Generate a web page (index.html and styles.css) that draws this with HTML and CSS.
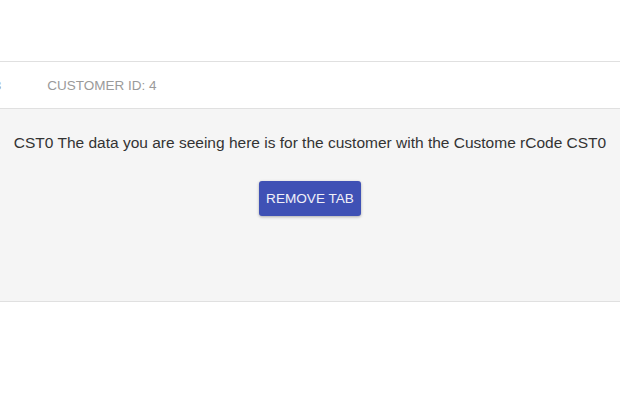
FILE: index.html
```html
<!DOCTYPE html>
<html lang="en">
<head>
<meta charset="UTF-8">
<meta name="viewport" content="width=device-width, initial-scale=1.0">
<title>Customer Tabs</title>
<link rel="stylesheet" href="styles.css">
</head>
<body>

<div class="header"></div>

<div class="tabbar">
    <div class="tabs">
        <div class="tab">Customer ID: 3</div>
        <div class="tab">Customer ID: 4</div>
    </div>
</div>

<div class="tab-content">
    <p>CST0 The data you are seeing here is for the customer with the Custome rCode CST0</p>
    <button class="remove-btn">Remove Tab</button>
</div>

</body>
</html>
```

FILE: styles.css
```css
body {
    font-family: "Liberation Sans", Arial, sans-serif;
    margin: 0;
    padding: 0;
    background: #fff;
    color: #333;
}
.header {
    height: 61px;
}
.tabbar {
    border-top: 1px solid #e0e0e0;
    border-bottom: 1px solid #e0e0e0;
    height: 46px;
    overflow: hidden;
}
.tabs {
    display: flex;
    margin-left: -131px;
}
.tab {
    padding: 0 23px;
    line-height: 48px;
    font-size: 13.5px;
    text-transform: uppercase;
    color: #9a9a9a;
    white-space: nowrap;
}
.tab-content {
    background-color: #f5f5f5;
    height: 193px;
    box-sizing: border-box;
    border-bottom: 1px solid #e0e0e0;
    padding-top: 24px;
    text-align: center;
}
.tab-content p {
    margin: 0;
    font-size: 15.5px;
    line-height: 20px;
}
.remove-btn {
    margin-top: 28px;
    height: 35px;
    padding: 0 7px;
    font-family: inherit;
    font-size: 13.6px;
    text-transform: uppercase;
    background-color: #3f51b5;
    color: #f0f0f8;
    border: none;
    border-radius: 3px;
    box-shadow: 0 1px 3px rgba(0, 0, 0, 0.3);
    cursor: pointer;
}
```
